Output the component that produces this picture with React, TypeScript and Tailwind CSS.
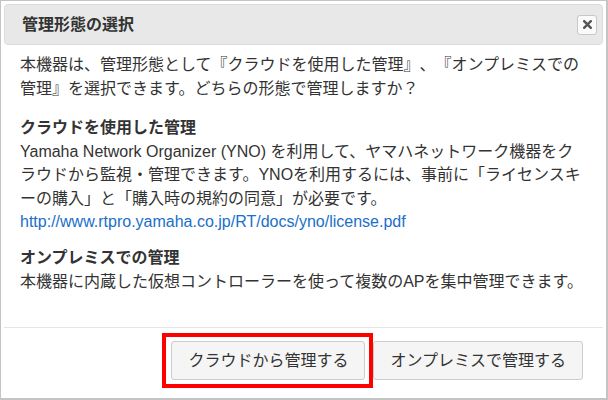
import React from "react";

const font = "font-['Liberation_Sans','Noto_Sans_CJK_JP',sans-serif]";

const CloseButton: React.FC = () => (
  <button
    type="button"
    className="flex h-[20px] w-[20px] items-center justify-center rounded-[3px] border border-[#c8c8c8] bg-[#fafafa]"
  >
    <svg width="9" height="9" viewBox="0 0 9 9">
      <path d="M1.2 1.2 L7.8 7.8 M7.8 1.2 L1.2 7.8" stroke="#555" strokeWidth="2.4" strokeLinecap="square" />
    </svg>
  </button>
);

export default function App() {
  return (
    <div
      className={`${font} flex h-[400px] w-[608px] flex-col border border-r-2 border-b-2 border-[#c4c4c4] bg-white text-[16px] text-[#333] [text-spacing-trim:space-all]`}
    >
      {/* ヘッダー */}
      <div className="mx-[3px] mt-[3px] flex h-[41px] items-center justify-between rounded-[4px] border border-[#dcdcdc] bg-[#e8e8e8] pl-[17px] pr-[5px]">
        <h1 className="text-[16px] font-bold text-[#333]">管理形態の選択</h1>
        <CloseButton />
      </div>

      {/* 本文 */}
      <div className="pl-[19px] pr-[4px] pt-[8px] leading-[23.5px] whitespace-nowrap">
        <p>
          本機器は、管理形態として『クラウドを使用した管理』、『オンプレミスでの
          <br />
          管理』を選択できます。どちらの形態で管理しますか？
        </p>

        <h2 className="mt-[16px] font-bold">クラウドを使用した管理</h2>
        <p>
          Yamaha Network Organizer (YNO) を利用して、ヤマハネットワーク機器をク
          <br />
          ラウドから監視・管理できます。YNOを利用するには、事前に「ライセンスキ
          <br />
          ーの購入」と「購入時の規約の同意」が必要です。
          <br />
          <a href="#" className="text-[#1a6fc9]">
            http://www.rtpro.yamaha.co.jp/RT/docs/yno/license.pdf
          </a>
        </p>

        <h2 className="mt-[12.5px] font-bold">オンプレミスでの管理</h2>
        <p>本機器に内蔵した仮想コントローラーを使って複数のAPを集中管理できます。</p>
      </div>

      {/* フッター */}
      <div className="mx-[3px] mt-auto flex h-[71px] justify-end gap-[8px] border-t border-[#e5e5e5] pr-[20px] pt-[13px]">
        <div className="relative h-[39px]">
          <button
            type="button"
            className="h-[39px] rounded-[3px] border border-[#cccccc] bg-[#f5f5f5] px-4 text-[16px] text-[#333]"
          >
            クラウドから管理する
          </button>
          <div className="pointer-events-none absolute -bottom-[8px] -left-[9px] -right-[8px] -top-[8px] border-4 border-[#ff0000]" />
        </div>
        <button
          type="button"
          className="h-[39px] rounded-[3px] border border-[#cccccc] bg-[#f5f5f5] px-4 text-[16px] text-[#333]"
        >
          オンプレミスで管理する
        </button>
      </div>
    </div>
  );
}
